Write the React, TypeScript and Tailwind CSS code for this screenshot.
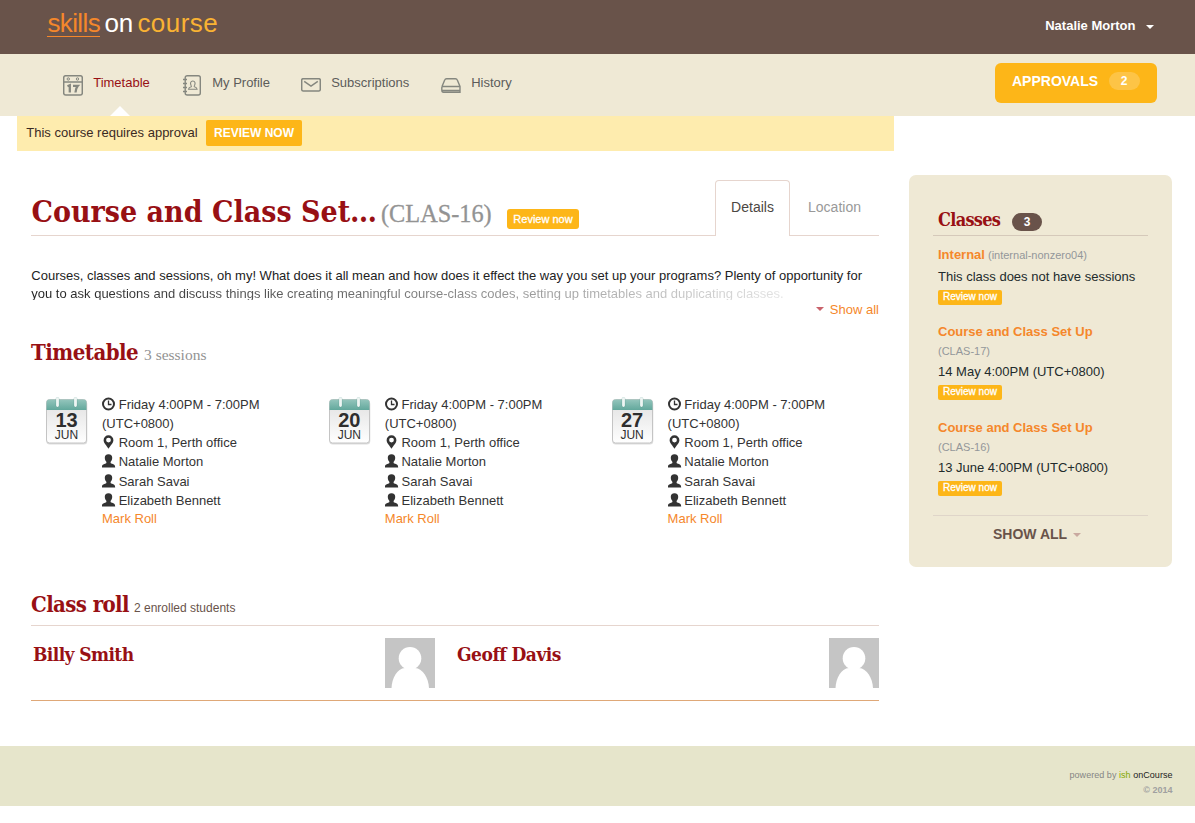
import React from "react";

const sessions = [
  { day: "13", month: "JUN" },
  { day: "20", month: "JUN" },
  { day: "27", month: "JUN" },
];
const tutors = ["Natalie Morton", "Sarah Savai", "Elizabeth Bennett"];

const heading = "font-['DejaVu_Serif_Condensed','DejaVu_Serif',serif] font-bold text-[#981014] whitespace-nowrap";
const serif = "font-['Liberation_Serif',serif]";

function Caret({ className }: { className: string }) {
  return (
    <svg className={className} width="8" height="4" viewBox="0 0 8 4" fill="currentColor">
      <path d="M0 0h8L4 4z" />
    </svg>
  );
}

function CalendarIcon() {
  return (
    <svg width="20" height="21" viewBox="0 0 20 21" fill="none" stroke="#85877f" strokeWidth="1.5">
      <rect x=".7" y=".7" width="18.6" height="19.4" rx="2" />
      <path d="M1 7h18" />
      <circle cx="5.3" cy="4" r="1.2" strokeWidth="1" />
      <circle cx="14.5" cy="4" r="1.2" strokeWidth="1" />
      <path d="M4.500 11.200l2.300-1v7.300M10 10.800h4.800c-1.700 2-2.100 3.800-2.300 6.700" strokeWidth="2.300" />
    </svg>
  );
}

function ProfileIcon() {
  return (
    <svg className="ml-px" width="18" height="21" viewBox="0 0 18 21" fill="none" stroke="#85877f" strokeWidth="1.4">
      <rect x="2.200" y=".7" width="15.100" height="19.300" rx="2" />
      <path d="M0 4.500h4M0 8.500h4M0 12.500h4M0 16.500h4" />
      <path d="M5.500 14.300c.2-1.800 1-2 2.800-2.600.4-.4 0-.9-.3-1.400-1-2.100-.4-4.300 1.800-4.300s2.800 2.200 1.800 4.300c-.3.500-.7 1-.3 1.400 1.800.6 2.600.8 2.800 2.600z" strokeWidth="1.100" />
    </svg>
  );
}

function MailIcon() {
  return (
    <svg width="20" height="14" viewBox="0 0 20 14" fill="none" stroke="#85877f" strokeWidth="1.500">
      <rect x=".7" y=".7" width="18.600" height="12.300" rx="1.500" />
      <path d="M3.200 3.300L10 8l6.800-4.700" />
    </svg>
  );
}

function DriveIcon() {
  return (
    <svg width="20" height="15" viewBox="0 0 20 15" fill="none" stroke="#85877f" strokeWidth="1.400">
      <path d="M1 8.500L3.700 2Q4.200.7 5.500.7h9q1.300 0 1.800 1.300L19 8.500v5.800H2.500Q.8 14.200.8 12V9.500Q.8 8.500 2 8.500h17M1.500 12.500h17.300" />
    </svg>
  );
}

function ClockIcon() {
  return (
    <svg className="mr-[2.7px] mb-[2px] shrink-0" width="14" height="14" viewBox="0 0 14 14" fill="none" stroke="#333">
      <circle cx="6.500" cy="7" r="5.500" strokeWidth="2" />
      <path d="M6.500 3.500V7.500h3" strokeWidth="1.300" />
    </svg>
  );
}

function PinIcon() {
  return (
    <svg className="mr-[2.7px] mb-[2px] shrink-0" width="14" height="14" viewBox="0 0 14 14" fill="#333">
      <path fillRule="evenodd" d="M6.500.3a4.900 4.900 0 0 1 4.900 4.900C11.400 8 8 11 6.500 13.700 5 11 1.600 8 1.600 5.200A4.900 4.900 0 0 1 6.500.3zm0 2.400a2.400 2.400 0 1 0 0 4.800 2.400 2.400 0 0 0 0-4.800z" />
    </svg>
  );
}

function UserIcon() {
  return (
    <svg className="mr-[2.7px] mb-[2px] shrink-0" width="14" height="14" viewBox="0 0 14 14" fill="#333">
      <path d="M6.500 .3c2.700 0 3.800 1.400 3.700 3.600-.1 1.700-.7 2.900-1.500 3.900-.3.900 0 1.500.6 1.700 2.500.7 3.900 1.300 3.900 4H-.2c0-2.700 1.400-3.300 3.900-4 .6-.2.900-.8.600-1.700C3.500 6.800 2.900 5.600 2.800 3.900 2.700 1.700 3.800.3 6.500.3z" />
    </svg>
  );
}

function DateTile({ day, month }: { day: string; month: string }) {
  return (
    <div className="relative h-[46px] w-[41px] shrink-0">
      <svg className="absolute left-0 top-0" width="43" height="50" viewBox="0 0 43 50">
        <defs>
          <linearGradient id={"paper" + day} x1="0" y1="0" x2="0" y2="1">
            <stop offset="0" stopColor="#e0e0e0" />
            <stop offset="1" stopColor="#fff" />
          </linearGradient>
          <linearGradient id={"band" + day} x1="0" y1="0" x2="0" y2="1">
            <stop offset="0" stopColor="#94c5bc" />
            <stop offset="1" stopColor="#62a89c" />
          </linearGradient>
        </defs>
        <rect x=".3" y="3.500" width="41" height="44" rx="3.500" fill="#ddd" />
        <rect x=".5" y="2.500" width="40" height="43.500" rx="3" fill={`url(#paper${day})`} stroke="#c4c4c4" />
        <path d="M.5 13V5.500q0-3 3-3h34q3 0 3 3V13z" fill={`url(#band${day})`} />
        <path d="M11.500 2v6.500M29.500 2v6.500" stroke="#3f8378" strokeWidth="4" strokeLinecap="round" opacity=".25" />
        <path d="M11.500 2v6.500M29.500 2v6.500" stroke="#eef5f3" strokeWidth="2.800" strokeLinecap="round" />
      </svg>
      <div className="relative flex flex-col items-center pt-[13px] text-[#2e2e2e]">
        <div className="h-[20px] text-[20px] leading-[20px] font-bold">{day}</div>
        <div className="h-[10px] text-[12px] leading-[10px]">{month}</div>
      </div>
    </div>
  );
}

function Session({ day, month }: { day: string; month: string }) {
  return (
    <div className="flex w-[282.8px] shrink-0">
      <div className="pt-[2px]">
        <DateTile day={day} month={month} />
      </div>
      <div className="ml-[15px] w-[180px] text-[13px] leading-[19px] text-[#333]">
        <div className="flex h-[19px] items-center whitespace-nowrap"><ClockIcon />Friday 4:00PM - 7:00PM</div>
        <div className="h-[19px]">(UTC+0800)</div>
        <div className="flex h-[19px] items-center"><PinIcon />Room 1, Perth office</div>
        <div className="flex h-[19px] items-center"><UserIcon />{tutors[0]}</div>
        <div className="flex h-[20px] items-center pt-px"><UserIcon />{tutors[1]}</div>
        <div className="flex h-[19px] items-center"><UserIcon />{tutors[2]}</div>
        <div className="h-[18px] leading-[18px] text-[#f5872b]">Mark Roll</div>
      </div>
    </div>
  );
}

function Avatar() {
  return (
    <svg width="50" height="50" viewBox="0 0 50 50">
      <path d="M0 0h50v50H0z" fill="#c5c5c5" />
      <circle cx="25" cy="20.300" r="11.300" fill="#fff" />
      <path d="M6.500 50C7 40 12 30.500 20 30h10c8 .5 13.500 10 14 20z" fill="#fff" />
    </svg>
  );
}

function NavItem({ icon, label, width, active }: { icon: React.ReactNode; label: string; width: string; active?: boolean }) {
  return (
    <div className={`flex h-full shrink-0 ${width}`}>
      <div className="flex h-[62px] w-[30.2px] items-center">{icon}</div>
      <div className={`pt-[20px] text-[13px] leading-[18px] ${active ? "text-[#981014]" : "text-[#5c5c5a]"}`}>{label}</div>
    </div>
  );
}

function SideClass({ name, code, when, inline }: { name: string; code: string; when: string; inline?: boolean }) {
  return (
    <div className={inline ? "h-[77px]" : "h-[96px]"}>
      <div className={inline ? "flex h-[21px]" : "h-[39px]"}>
        <div className="h-[19px] text-[13px] leading-[20px] font-bold whitespace-nowrap text-[#f5872b]">{name}</div>
        <div className={`h-[20px] text-[11px] leading-[20px] text-[#93979a] ${inline ? "ml-[3px]" : ""}`}>{code}</div>
      </div>
      <div className="h-[21px] text-[13px] leading-[21px] whitespace-nowrap text-[#222b2c]">{when}</div>
      <div className="mt-[3px] h-[15px] w-[64px] rounded-[2px] bg-[#fdb618] text-center text-[10px] leading-[14px] text-white [-webkit-text-stroke:0.3px_white]">Review now</div>
    </div>
  );
}

export default function App() {
  return (
    <div className="h-[823px] w-[1195px] overflow-hidden bg-white font-['Liberation_Sans',Arial,sans-serif]">
      <header className="flex h-[54px] justify-between bg-[#69534a] pl-[47.4px] pr-[41px]">
        <div className="flex pt-[10px] text-[26px] leading-[27px]">
          <span className="mr-[4px] h-[27px] w-[53px] border-b border-[#f5872b] tracking-[-0.6px] text-[#f5872b]">skills</span>
          <span className="mr-[4px] w-[29px] text-white">on</span>
          <span className="tracking-[0.45px] text-[#f9b233]">course</span>
        </div>
        <div className="flex h-[52px] items-center text-[13px] font-bold text-white">
          Natalie Morton
          <Caret className="mt-[2px] ml-[10.5px]" />
        </div>
      </header>

      <nav className="flex h-[62px] justify-between bg-[#efe9d5] pr-[38px] pl-[63px]">
        <div className="relative flex">
          <NavItem icon={<CalendarIcon />} label="Timetable" width="w-[119px]" active />
          <NavItem icon={<ProfileIcon />} label="My Profile" width="w-[119px]" />
          <NavItem icon={<MailIcon />} label="Subscriptions" width="w-[140px]" />
          <NavItem icon={<DriveIcon />} label="History" width="w-[90px]" />
          <svg className="absolute bottom-0 left-[47px]" width="20" height="10" viewBox="0 0 20 10"><path d="M0 10L10 0l10 10z" fill="#fff" /></svg>
        </div>
        <div className="mt-[9px] flex h-[40px] w-[162px] rounded-[6px] bg-[#fdb618] pt-[9px] pl-[17px] text-[14px] leading-[18px] font-bold text-white">
          APPROVALS
          <span className="ml-[11px] h-[18px] w-[31px] rounded-full bg-white/20 pr-px text-center text-[12px]">2</span>
        </div>
      </nav>

      <div className="flex h-[630px] pl-[17px]">
        <div className="w-[877px] shrink-0">
          <div className="flex h-[35px] items-center bg-[#feecae] pb-[2px] pl-[9.3px] text-[13px] text-[#3a2a24]">
            <span className="w-[179.7px]">This course requires approval</span>
            <span className="h-[26px] w-[96px] rounded-[2px] bg-[#fdb618] text-center text-[12px] leading-[26px] font-bold text-white">REVIEW NOW</span>
          </div>

          <main className="pr-[15px] pl-[14px]">
            <div className="mt-[29px] flex h-[56px]">
              <div className="flex w-[684px] items-baseline border-b border-[#e6d5ce] pt-[11px] whitespace-nowrap">
                <h1 className={`w-[350px] pl-[0.5px] text-[30px] leading-[42px] ${heading}`}>Course and Class Set…</h1>
                <span className={`w-[126px] ${serif} text-[24.3px] text-[#939393] [-webkit-text-stroke:0.3px_#939393]`}>(CLAS-16)</span>
                <span className="mt-[18px] h-[20px] w-[72px] self-start rounded-[3px] bg-[#fdb618] text-center text-[11px] leading-[20px] text-white [-webkit-text-stroke:0.3px_white]">Review now</span>
              </div>
              <div className="w-[75px] rounded-t-[4px] border border-b-0 border-[#e6d5ce] pt-[16px] text-center text-[14px] leading-[20px] text-[#4c4743]">Details</div>
              <div className="w-[89px] border-b border-[#e6d5ce] pt-[17px] text-center text-[14px] leading-[20px] text-[#999]">Location</div>
            </div>

            <div className="mt-[31px] h-[33px] overflow-hidden pl-[0.3px] text-[13px] leading-[18px] whitespace-nowrap text-[#222]">
              <p>Courses, classes and sessions, oh my! What does it all mean and how does it effect the way you set up your programs? Plenty of opportunity for</p>
              <p className="w-[848px] bg-linear-to-r from-[#222] to-white bg-clip-text text-transparent">you to ask questions and discuss things like creating meaningful course-class codes, setting up timetables and duplicating classes.</p>
            </div>
            <div className="flex h-[19px] items-center justify-end text-[13px] text-[#f5872b]">
              <Caret className="mr-[6px] mb-px text-[#c9636b]" />Show all
            </div>

            <div className="mt-[18px] flex h-[30px] items-baseline">
              <h2 className={`w-[113px] text-[22px] leading-[30px] tracking-[-0.5px] ${heading}`}>Timetable</h2>
              <span className={`${serif} text-[15.5px] text-[#939393]`}>3 sessions</span>
            </div>

            <div className="mt-[28px] flex h-[133px] pl-[15px]">
              {sessions.map((s) => <Session key={s.day} {...s} />)}
            </div>

            <div className="mt-[60px] flex h-[38px] items-baseline border-b border-[#e6d5ce] pt-px">
              <h2 className={`w-[103px] text-[22px] leading-[30px] tracking-[-0.6px] ${heading}`}>Class roll</h2>
              <span className="text-[12px] text-[#69534a]">2 enrolled students</span>
            </div>
            <div className="flex h-[75px] border-b border-[#dfa878] pt-[12px]">
              <div className="flex w-[404px] justify-between pl-[2px]">
                <h3 className={`pt-px text-[19px] leading-[30px] tracking-[-0.6px] ${heading}`}>Billy Smith</h3>
                <Avatar />
              </div>
              <div className="flex w-[444px] justify-between pl-[22px]">
                <h3 className={`pt-px text-[19px] leading-[30px] tracking-[-0.5px] ${heading}`}>Geoff Davis</h3>
                <Avatar />
              </div>
            </div>
          </main>
        </div>

        <aside className="mt-[59px] ml-[15px] h-[392px] w-[263px] rounded-[7px] bg-[#efe9d5] px-[24px] pt-[27px]">
          <div className="flex h-[34px] w-[215px] border-b border-[#d5c9ba] pl-[5px]">
            <h2 className={`w-[74px] text-[18px] leading-[35px] tracking-[-0.7px] ${heading}`}>Classes</h2>
            <span className="mt-[11px] h-[18px] w-[30px] rounded-full bg-[#69534a] text-center text-[12px] leading-[18px] font-bold text-white">3</span>
          </div>
          <div className="pt-[9px] pl-[5px]">
            <SideClass inline name="Internal" code="(internal-nonzero04)" when="This class does not have sessions" />
            <SideClass name="Course and Class Set Up" code="(CLAS-17)" when="14 May 4:00PM (UTC+0800)" />
            <SideClass name="Course and Class Set Up" code="(CLAS-16)" when="13 June 4:00PM (UTC+0800)" />
          </div>
          <div className="mt-px flex w-[215px] items-center border-t border-[#dfd5c9] pt-[8px] pl-[60px] text-[14px] leading-[20px] font-bold text-[#69534a]">
            SHOW ALL<Caret className="mt-[2px] ml-[6px] text-[#c9a9a0]" />
          </div>
        </aside>
      </div>

      <footer className="flex h-[60px] flex-col items-end bg-[#e6e5cb] pt-[22px] pr-[22.500px]">
        <div className="text-[9px] leading-[14px] tracking-[0.04px] text-[#858585]">powered by <span className="text-[#83a800]">ish</span> <span className="text-[#222]">onCourse</span></div>
        <div className="text-[9px] leading-[16px] font-bold text-[#a0a0a0]">© 2014</div>
      </footer>
    </div>
  );
}
